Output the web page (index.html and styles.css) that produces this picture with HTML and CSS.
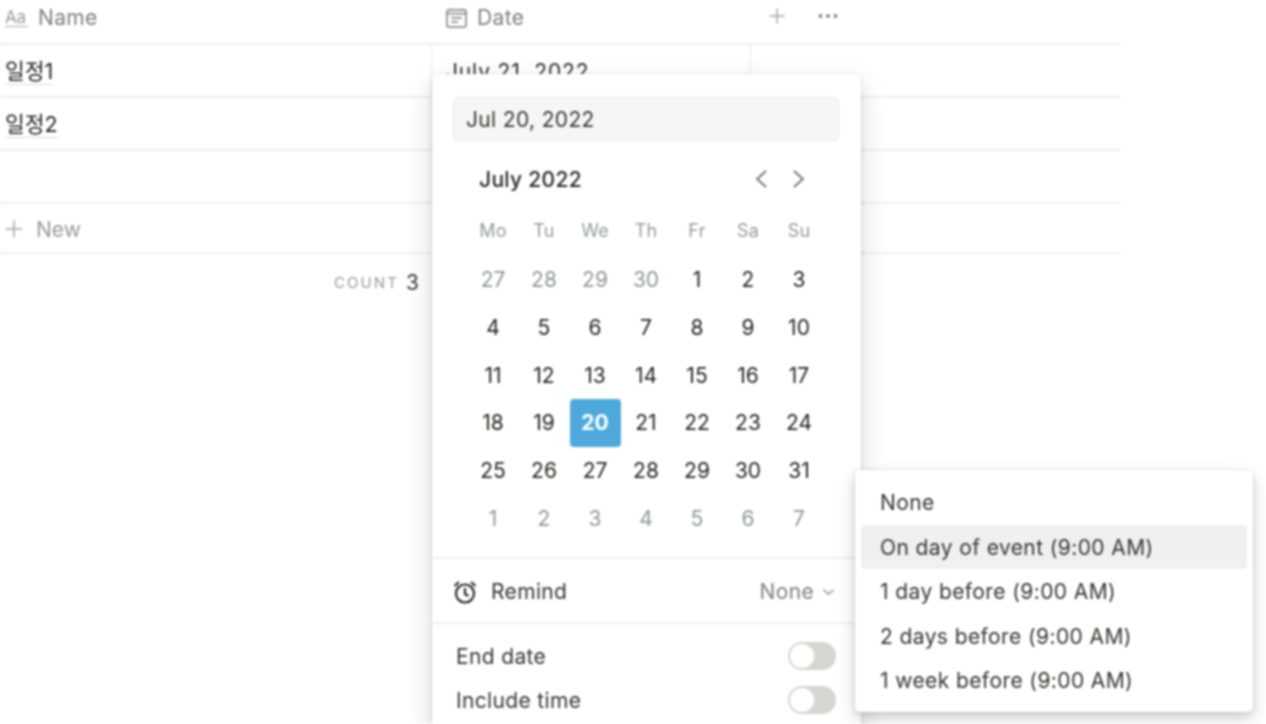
FILE: index.html
```html
<!DOCTYPE html>
<html lang="en">
<head>
<meta charset="utf-8">
<title>Date reminder</title>
<link rel="stylesheet" href="styles.css">
</head>
<body>
<div class="page">
  <div class="table">
    <div class="row head">
      <div class="cell name-cell"><span class="aa">Aa</span><span class="head-label">Name</span></div>
      <div class="cell date-cell">
        <svg class="cal-icon" viewBox="0 0 24 24" fill="none" stroke="#8f8e8b" stroke-width="1.8"><rect x="2" y="4" width="20" height="18" rx="2.5"/><path d="M2 8h20M6 2.5v2M18 2.5v2"/><path d="M6.5 12.5h11M6.5 16.5h7"/></svg>
        <span class="head-label">Date</span>
      </div>
      <div class="cell tools">
        <svg class="plus" viewBox="0 0 16 16" fill="none" stroke="#a9a8a5" stroke-width="1.5"><path d="M8 0.5v15M0.5 8h15"/></svg>
        <svg class="dots" viewBox="0 0 20 4" fill="#807f7c"><circle cx="2.5" cy="2" r="1.9"/><circle cx="10" cy="2" r="1.9"/><circle cx="17.5" cy="2" r="1.9"/></svg>
      </div>
    </div>
    <div class="row item">
      <div class="cell name-cell line"><span class="title">일정1</span></div>
      <div class="cell date-cell line"><span class="date-value">July 21, 2022</span></div>
      <div class="cell"></div>
    </div>
    <div class="row item">
      <div class="cell name-cell line"><span class="title">일정2</span></div>
      <div class="cell date-cell line"></div>
      <div class="cell"></div>
    </div>
    <div class="row item">
      <div class="cell name-cell line"></div>
      <div class="cell date-cell line"></div>
      <div class="cell"></div>
    </div>
    <div class="row new-row">
      <svg class="new-plus" viewBox="0 0 16 16" fill="none" stroke="#a9a8a5" stroke-width="1.4"><path d="M8 0.5v15M0.5 8h15"/></svg>
      <span class="new-label">New</span>
    </div>
    <div class="count-row"><span class="count-label">COUNT</span><span class="count-value">3</span></div>
  </div>

  <div class="popover">
    <div class="date-input">Jul 20, 2022</div>
    <div class="month-bar">
      <span class="month">July 2022</span>
      <div class="month-nav">
        <svg viewBox="0 0 14 20" fill="none" stroke="#6f6e6b" stroke-width="1.7"><path d="M12 2L3 10l9 8"/></svg>
        <svg viewBox="0 0 14 20" fill="none" stroke="#6f6e6b" stroke-width="1.7"><path d="M2 2l9 8-9 8"/></svg>
      </div>
    </div>
    <div class="week">
      <span>Mo</span><span>Tu</span><span>We</span><span>Th</span><span>Fr</span><span>Sa</span><span>Su</span>
    </div>
    <div class="days">
      <span class="muted">27</span><span class="muted">28</span><span class="muted">29</span><span class="muted">30</span><span>1</span><span>2</span><span>3</span>
      <span>4</span><span>5</span><span>6</span><span>7</span><span>8</span><span>9</span><span>10</span>
      <span>11</span><span>12</span><span>13</span><span>14</span><span>15</span><span>16</span><span>17</span>
      <span>18</span><span>19</span><span class="selected">20</span><span>21</span><span>22</span><span>23</span><span>24</span>
      <span>25</span><span>26</span><span>27</span><span>28</span><span>29</span><span>30</span><span>31</span>
      <span class="muted">1</span><span class="muted">2</span><span class="muted">3</span><span class="muted">4</span><span class="muted">5</span><span class="muted">6</span><span class="muted">7</span>
    </div>
    <div class="remind">
      <svg class="alarm" viewBox="0 0 24 24" fill="none" stroke="#2a2925" stroke-width="2.2"><circle cx="12" cy="13.5" r="9"/><path d="M12 8v6l3.5 2"/><path d="M1.5 6L6 2M22.5 6L18 2"/></svg>
      <span class="remind-label">Remind</span>
      <span class="remind-value">None</span>
      <svg class="chev" viewBox="0 0 14 8" fill="none" stroke="#8f8e8b" stroke-width="1.4"><path d="M1.5 1.5L7 6.5l5.5-5"/></svg>
    </div>
    <div class="options">
      <div class="option"><span>End date</span><span class="toggle"></span></div>
      <div class="option"><span>Include time</span><span class="toggle"></span></div>
    </div>
  </div>

  <div class="menu">
    <div class="menu-item">None</div>
    <div class="menu-item active">On day of event (9:00 AM)</div>
    <div class="menu-item">1 day before (9:00 AM)</div>
    <div class="menu-item">2 days before (9:00 AM)</div>
    <div class="menu-item">1 week before (9:00 AM)</div>
  </div>
</div>
</body>
</html>
```
FILE: styles.css
```css
* { box-sizing: border-box; }
html, body { margin: 0; height: 100%; background: #fff; overflow: hidden; }
body { font-family: Inter, "Noto Sans CJK KR", sans-serif; color: #37352f; }
.page { position: relative; width: 1266px; height: 724px; overflow: hidden; filter: blur(0.8px); }

.table { width: 1121px; }
.row { display: flex; }
.cell { display: flex; align-items: center; overflow: hidden; }
.name-cell { width: 432px; padding-left: 5px; }
.date-cell { width: 319px; padding-left: 13px; }
.line { border-right: 1.5px solid #ebebea; }

.head { height: 45px; border-bottom: 2px solid #eeeeed; padding-top: 1px; padding-bottom: 9px; align-items: center; }
.head .cell { height: 34px; }
.aa { font-size: 17px; color: #9b9a97; border-bottom: 1.5px solid #a9a8a5; line-height: 17px; width: 23px; margin-right: 10px; letter-spacing: -0.2px; }
.head-label { font-size: 21px; letter-spacing: 0.35px; color: #7f7e7b; }
.cal-icon { width: 23px; height: 23px; margin-right: 9px; }
.tools { padding-left: 18px; }
.plus { width: 16px; height: 16px; margin-bottom: 3px; }
.dots { width: 20px; height: 4px; margin-left: 33px; margin-bottom: 4px; }

.item { height: 53px; border-bottom: 2px solid #eeeeed; }
.item .name-cell { padding-top: 2px; }
.title { font-size: 21.5px; font-weight: 400; color: #1f1e1a; border-bottom: 1.5px solid #dcdcda; line-height: 25px; }
.date-value { font-size: 21px; letter-spacing: 0.85px; color: #2a2925; padding-top: 1px; margin-left: 1px; }

.new-row { height: 50px; border-bottom: 2px solid #eeeeed; align-items: center; padding: 2px 0 0 5px; }
.new-plus { width: 18px; height: 18px; margin-right: 13px; }
.new-label { font-size: 21px; color: #9b9a97; }

.count-row { width: 419px; height: 58px; display: flex; align-items: center; justify-content: flex-end; padding-bottom: 1px; }
.count-label { font-size: 15px; letter-spacing: 2.1px; color: #9b9a97; margin-right: 7px; }
.count-value { font-size: 21px; color: #37352f; }

.popover {
  position: absolute; left: 432px; top: 74px; width: 429px; height: 660px;
  background: #fff; border-radius: 5px;
  box-shadow: 0 0 0 1px rgba(15,15,15,.04), 0 4px 10px rgba(15,15,15,.08), 0 10px 28px rgba(15,15,15,.14);
  display: flex; flex-direction: column; padding-top: 23px;
}
.date-input {
  margin: 0 22px 0 21px; height: 44px; background: #f6f6f4; border: 1px solid #e8e8e6; border-radius: 5px;
  padding-left: 12px; font-size: 21px; letter-spacing: 0.35px; line-height: 43px; color: #37352f;
}
.month-bar { display: flex; align-items: center; justify-content: space-between; height: 30px; margin-top: 23px; padding: 0 55px 0 47px; }
.month { font-size: 21px; font-weight: 500; letter-spacing: 0.3px; color: #2a2925; }
.month-nav { display: flex; gap: 24px; }
.month-nav svg { width: 14px; height: 20px; }

.week, .days { display: grid; grid-template-columns: repeat(7, 51px); margin-left: 35.5px; text-align: center; }
.week { margin-top: 25px; height: 24px; font-size: 18px; letter-spacing: 0.2px; line-height: 24px; color: #939b9b; }
.days { margin-top: 13px; grid-auto-rows: 47.7px; font-size: 21px; color: #26251f; }
.days span { display: flex; align-items: center; justify-content: center; border-radius: 4px; }
.days .muted { color: #8f9797; }
.days .selected { background: #4fa8dc; color: #fff; font-weight: 700; }

.remind { display: flex; align-items: center; height: 67px; margin-top: 15px; border-top: 2px solid #f0f0ef; border-bottom: 2px solid #f0f0ef; padding: 2px 26px 0 21px; font-size: 21px; letter-spacing: 0.35px; }
.alarm { width: 24px; height: 24px; }
.remind-label { margin-left: 14px; color: #37352f; flex: 1; }
.remind-value { color: #7f7e7b; }
.chev { width: 13px; height: 8px; margin-left: 8px; }

.options { padding: 10px 25px 0 24px; }
.option { display: flex; align-items: center; justify-content: space-between; height: 44px; font-size: 21px; letter-spacing: 0.35px; color: #37352f; }
.toggle { position: relative; width: 48px; height: 28px; border-radius: 14px; background: #d7d6d2; }
.toggle::after { content: ""; position: absolute; left: 2px; top: 2px; width: 24px; height: 24px; border-radius: 50%; background: #fff; }

.menu {
  position: absolute; left: 855px; top: 470px; width: 398px; height: 242px;
  background: #fff; border-radius: 5px; padding: 10px 6px;
  box-shadow: 0 0 0 1px rgba(15,15,15,.04), 0 3px 8px rgba(15,15,15,.12), 0 8px 20px rgba(15,15,15,.14);
}
.menu-item { height: 44.5px; line-height: 46px; padding-left: 19px; font-size: 21px; letter-spacing: 0.4px; color: #37352f; border-radius: 4px; }
.menu-item.active { background: #f0f0f0; }
```
